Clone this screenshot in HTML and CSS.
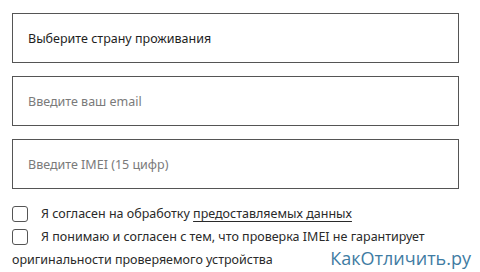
FILE: index.html
```html
<!DOCTYPE html>
<html lang="ru">
<head>
<meta charset="utf-8">
<link rel="stylesheet" href="styles.css">
</head>
<body>
<div class="form">
  <div class="field"><span class="value">Выберите страну проживания</span></div>
  <div class="field"><span class="placeholder">Введите ваш email</span></div>
  <div class="field"><span class="placeholder">Введите IMEI (15 цифр)</span></div>
  <div class="checks">
    <p class="check"><span class="box"></span>Я согласен на обработку <span class="link">предоставляемых данных</span></p>
    <p class="check"><span class="box"></span>Я понимаю и согласен с тем, что проверка IMEI не гарантирует</p>
    <div class="last-row">
      <span class="cont">оригинальности проверяемого устройства</span>
      <span class="watermark">КакОтличить.ру</span>
    </div>
  </div>
</div>
</body>
</html>
```

FILE: styles.css
```css
html, body {
  margin: 0;
  padding: 0;
  background: #fff;
  width: 480px;
  height: 272px;
  overflow: hidden;
}
body {
  font-family: "Noto Sans", "Open Sans", sans-serif;
  color: #222;
}
.form {
  padding: 13px 0 0 12px;
  width: 447px;
}
.field {
  box-sizing: border-box;
  height: 50px;
  border: 1px solid #555;
  margin-bottom: 13px;
  display: flex;
  align-items: center;
  padding-left: 15px;
  font-size: 12.5px;
}
.value {
  color: #1e1e1e;
}
.placeholder {
  color: #7a7a7a;
}
.checks {
  font-size: 12.5px;
  line-height: 23px;
  color: #2a2a2a;
}
.check {
  margin: 0;
}
.box {
  display: inline-block;
  box-sizing: border-box;
  width: 16px;
  height: 16px;
  border: 1px solid #555;
  border-radius: 3px;
  vertical-align: -4px;
  margin-right: 13px;
}
.link {
  text-decoration: underline;
  text-underline-offset: 3px;
}
.last-row {
  display: flex;
  align-items: baseline;
  justify-content: space-between;
  margin-right: -12px;
  height: 23px;
}
.watermark {
  font-family: "Open Sans", "Noto Sans", sans-serif;
  font-size: 18px;
  line-height: 14px;
  color: #3f7ca3;
  position: relative;
  top: 1px;
}
```
